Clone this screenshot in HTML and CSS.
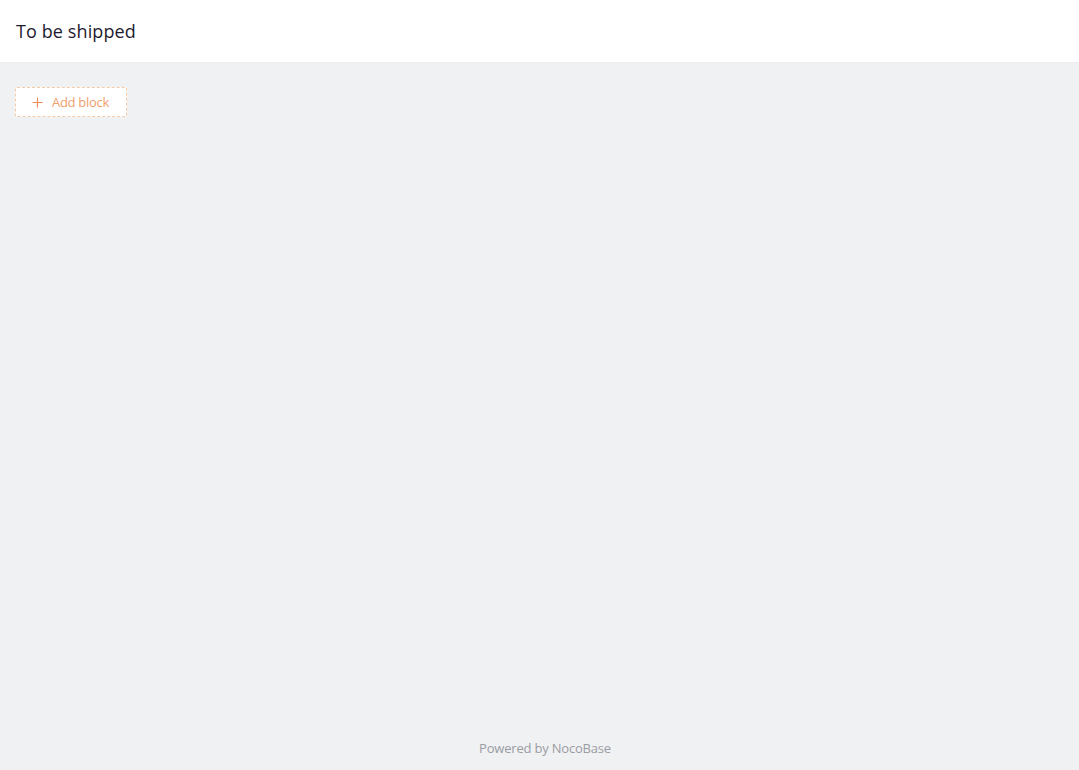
FILE: index.html
```html
<!DOCTYPE html>
<html>
<head>
<meta charset="utf-8">
<link rel="stylesheet" href="styles.css">
</head>
<body>
<div class="page">
  <header class="page-header">
    <h1 class="page-title">To be shipped</h1>
  </header>
  <main class="content">
    <button class="add-block">
      <svg class="plus" viewBox="0 0 12 12" width="11" height="11"><path d="M6 0.5V11.5M0.5 6H11.5" stroke="currentColor" stroke-width="1.2" fill="none"/></svg>
      <span class="label">Add block</span>
    </button>
  </main>
  <footer class="footer">Powered by NocoBase</footer>
</div>
</body>
</html>
```
FILE: styles.css
```css
html, body {
  margin: 0;
  padding: 0;
  height: 100%;
}
body {
  background: #f0f1f3;
  font-family: "Open Sans", "Noto Sans", sans-serif;
}
.page {
  display: flex;
  flex-direction: column;
  height: 770px;
}
.page-header {
  background: #fff;
  height: 63px;
  border-bottom: 1px solid #eceef0;
  display: flex;
  align-items: center;
  padding: 0 16px;
  box-sizing: border-box;
}
.page-title {
  margin: 0;
  font-size: 18px;
  font-weight: 400;
  color: #1d1b2e;
  letter-spacing: 0.1px;
}
.content {
  flex: 1;
  padding: 24px 15px;
}
.add-block {
  display: flex;
  align-items: center;
  gap: 9px;
  height: 30px;
  width: 112px;
  padding: 0 0 0 16px;
  box-sizing: border-box;
  background: #fff;
  border: 1px dashed #f5c9a3;
  border-radius: 2px;
  color: #f0a06c;
  font-family: "Open Sans", "Noto Sans", sans-serif;
  font-size: 13px;
  white-space: nowrap;
  cursor: pointer;
}
.label {
  letter-spacing: -0.3px;
}
.plus {
  color: #ee8a55;
  flex: none;
}
.footer {
  text-align: center;
  font-size: 13px;
  letter-spacing: -0.2px;
  color: #9a9ca3;
  padding: 0 0 13px 11px;
}
```
